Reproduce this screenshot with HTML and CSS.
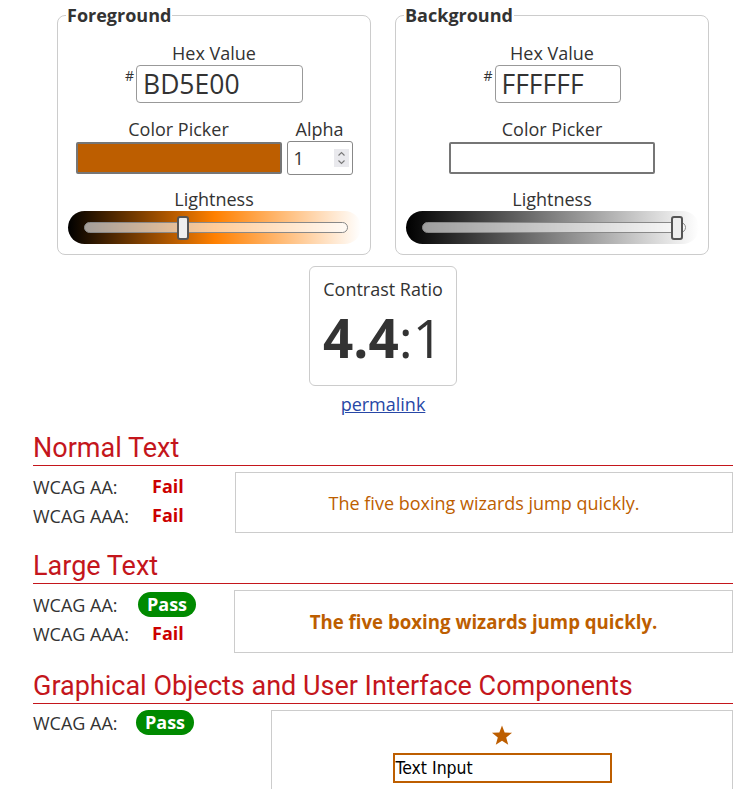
FILE: index.html
```html
<!DOCTYPE html>
<html lang="en">
<head>
    <meta charset="UTF-8">
    <meta name="viewport" content="width=device-width, initial-scale=1.0">
    <title>Contrast Checker</title>
    <link rel="stylesheet" href="styles.css">
</head>
<body>
<div class="page">
    <div class="pickers">
        <fieldset class="picker">
            <legend>Foreground</legend>
            <div class="field-label">Hex Value</div>
            <div class="hex-row">
                <span class="hash">#</span>
                <input class="hex-input hex-fg" type="text" value="BD5E00">
            </div>
            <div class="color-row">
                <div class="color-col">
                    <div class="field-label">Color Picker</div>
                    <div class="swatch swatch-fg"></div>
                </div>
                <div class="color-col">
                    <div class="field-label">Alpha</div>
                    <div class="alpha-input">
                        <span>1</span>
                        <span class="spin">
                            <svg width="9" height="18" viewBox="0 0 9 18"><polyline points="1.5,6.5 4.5,3.5 7.5,6.5" fill="none" stroke="#777" stroke-width="1.1"/><polyline points="1.5,11.5 4.5,14.5 7.5,11.5" fill="none" stroke="#777" stroke-width="1.1"/></svg>
                        </span>
                    </div>
                </div>
            </div>
            <div class="field-label field-label-light">Lightness</div>
            <div class="slider slider-fg">
                <div class="track"><div class="thumb" style="left: 37.5%"></div></div>
            </div>
        </fieldset>

        <fieldset class="picker">
            <legend>Background</legend>
            <div class="field-label">Hex Value</div>
            <div class="hex-row">
                <span class="hash">#</span>
                <input class="hex-input hex-bg" type="text" value="FFFFFF">
            </div>
            <div class="color-row">
                <div class="color-col">
                    <div class="field-label">Color Picker</div>
                    <div class="swatch swatch-bg"></div>
                </div>
            </div>
            <div class="field-label field-label-light">Lightness</div>
            <div class="slider slider-bg">
                <div class="track"><div class="thumb" style="left: 97.3%"></div></div>
            </div>
        </fieldset>
    </div>

    <div class="ratio">
        <div class="ratio-box">
            <div class="ratio-label">Contrast Ratio</div>
            <div class="ratio-value"><b>4.4</b>:1</div>
        </div>
        <a class="permalink" href="#">permalink</a>
    </div>

    <section class="result">
        <h2>Normal Text</h2>
        <div class="result-body result-normal">
            <div class="checks">
                <div class="check"><span class="check-name">WCAG AA:</span><span class="status fail">Fail</span></div>
                <div class="check"><span class="check-name">WCAG AAA:</span><span class="status fail">Fail</span></div>
            </div>
            <div class="sample">The five boxing wizards jump quickly.</div>
        </div>
    </section>

    <section class="result">
        <h2>Large Text</h2>
        <div class="result-body result-large">
            <div class="checks">
                <div class="check"><span class="check-name">WCAG AA:</span><span class="status pass">Pass</span></div>
                <div class="check"><span class="check-name">WCAG AAA:</span><span class="status fail">Fail</span></div>
            </div>
            <div class="sample sample-large">The five boxing wizards jump quickly.</div>
        </div>
    </section>

    <section class="result">
        <h2>Graphical Objects and User Interface Components</h2>
        <div class="result-body result-ui">
            <div class="checks">
                <div class="check check-ui"><span class="check-name">WCAG AA:</span><span class="status pass pass-ui">Pass</span></div>
            </div>
            <div class="sample sample-ui">
                <svg class="star" width="22" height="21" viewBox="0 0 24 23"><polygon points="12,0.5 14.9,8.2 23,8.6 16.6,13.7 18.8,21.7 12,17.2 5.2,21.7 7.4,13.7 1,8.6 9.1,8.2" fill="#bd5e00"/></svg>
                <div class="ui-input">Text Input</div>
            </div>
        </div>
    </section>
</div>
</body>
</html>
```

FILE: styles.css
```css
body {
    margin: 0;
    font-family: "Open Sans", sans-serif;
    font-size: 18px;
    color: #333;
    background: #fff;
}

.page {
    width: 700px;
    margin-left: 33px;
    padding-top: 3px;
}

.pickers {
    display: flex;
    justify-content: center;
    gap: 24px;
}

.picker {
    box-sizing: border-box;
    width: 314px;
    margin: 0;
    padding: 15px 8px 10px;
    border: 1px solid #ccc;
    border-radius: 8px;
    display: flex;
    flex-direction: column;
    align-items: center;
}

.picker legend {
    font-weight: bold;
    padding: 0 1px;
    line-height: 24px;
}

.field-label {
    line-height: 22px;
    text-align: center;
}

.hex-row {
    display: flex;
    align-items: flex-start;
    margin-top: 1px;
}

.hash {
    font-size: 14px;
    line-height: 14px;
    margin-top: 4px;
    margin-right: 2px;
}

.hex-input {
    box-sizing: border-box;
    height: 38px;
    padding: 0 6px;
    font-family: "Open Sans", sans-serif;
    font-size: 26.5px;
    color: #333;
    border: 1px solid #999;
    border-radius: 4px;
    background: #fff;
}

.hex-fg { width: 167px; }
.hex-bg { width: 126px; }

.color-row {
    display: flex;
    gap: 5px;
    margin-top: 15px;
    align-items: flex-end;
}

.color-col {
    display: flex;
    flex-direction: column;
    align-items: center;
}

.swatch {
    box-sizing: border-box;
    width: 206px;
    height: 32px;
    margin-top: 2px;
    margin-bottom: 1px;
    border: 2px solid #767676;
    border-radius: 2px;
}

.swatch-fg { background: #bd5e00; }
.swatch-bg { background: #fff; }

.alpha-input {
    box-sizing: border-box;
    width: 66px;
    height: 34px;
    margin-top: 1px;
    padding: 0 3px 0 6px;
    display: flex;
    align-items: center;
    justify-content: space-between;
    border: 1px solid #888;
    border-radius: 3px;
}

.spin {
    display: flex;
    align-items: center;
    justify-content: center;
    width: 15px;
    height: 18px;
    background: #e9e9ed;
}

.field-label-light {
    margin-top: 13px;
}

.slider {
    box-sizing: border-box;
    width: 293px;
    height: 33px;
    margin-top: 1px;
    padding: 0 13px 0 16px;
    display: flex;
    align-items: center;
    border-radius: 17px;
}

.slider-fg {
    background: linear-gradient(to right, #000 0%, #ff8000 50%, #fff 100%);
}

.slider-bg {
    background: linear-gradient(to right, #000 0%, #fff 100%);
}

.track {
    position: relative;
    flex: 1;
    height: 11px;
    box-sizing: border-box;
    border: 1px solid #888;
    border-radius: 6px;
    background: rgba(255, 255, 255, 0.6);
}

.thumb {
    position: absolute;
    top: 50%;
    box-sizing: border-box;
    width: 12px;
    height: 24px;
    margin-left: -6px;
    transform: translateY(-50%);
    background: #eee;
    border: 2px solid #555;
    border-radius: 3px;
}

.ratio {
    display: flex;
    flex-direction: column;
    align-items: center;
    margin-top: 11px;
}

.ratio-box {
    box-sizing: border-box;
    width: 148px;
    height: 120px;
    padding-top: 10px;
    border: 1px solid #ccc;
    border-radius: 6px;
    text-align: center;
}

.ratio-label {
    line-height: 24px;
}

.ratio-value {
    font-size: 53px;
    line-height: 74px;
}

.permalink {
    margin-top: 7px;
    line-height: 22px;
    color: #2747a6;
}

.result h2 {
    margin: 17px 0 0;
    padding-bottom: 1px;
    font-family: Roboto, sans-serif;
    font-size: 27px;
    font-weight: normal;
    line-height: 32px;
    color: #c4161c;
    border-bottom: 1px solid #c4161c;
}

.result + .result h2 {
    margin-top: 17px;
}

.result-body {
    display: grid;
    margin-top: 6px;
}

.result-normal { grid-template-columns: 202px 1fr; }
.result-large { grid-template-columns: 201px 1fr; }
.result-ui { grid-template-columns: 238px 1fr; }

.check {
    display: flex;
    align-items: center;
    height: 29px;
}

.check-ui {
    height: 25px;
}

.check-name {
    width: 105px;
}

.status {
    font-weight: bold;
    padding: 0 9px;
    line-height: 25px;
    border-radius: 13px;
}

.fail {
    color: #c00;
    padding-left: 14px;
}

.pass {
    color: #fff;
    background: #008a00;
}

.pass-ui {
    margin-left: -2px;
}

.sample {
    display: flex;
    align-items: center;
    justify-content: center;
    min-height: 59px;
    border: 1px solid #ccc;
    color: #bd5e00;
}

.sample-large {
    min-height: 61px;
    font-size: 18.67px;
    font-weight: bold;
}

.sample-ui {
    flex-direction: column;
    justify-content: flex-start;
    padding: 14px 0 20px;
}

.star {
    display: block;
}

.ui-input {
    box-sizing: border-box;
    width: 219px;
    height: 30px;
    margin-top: 7px;
    padding: 0 1px;
    border: 2px solid #bd5e00;
    font-family: "DejaVu Sans", sans-serif;
    font-stretch: condensed;
    font-size: 17.5px;
    line-height: 26px;
    color: #000;
}
```
